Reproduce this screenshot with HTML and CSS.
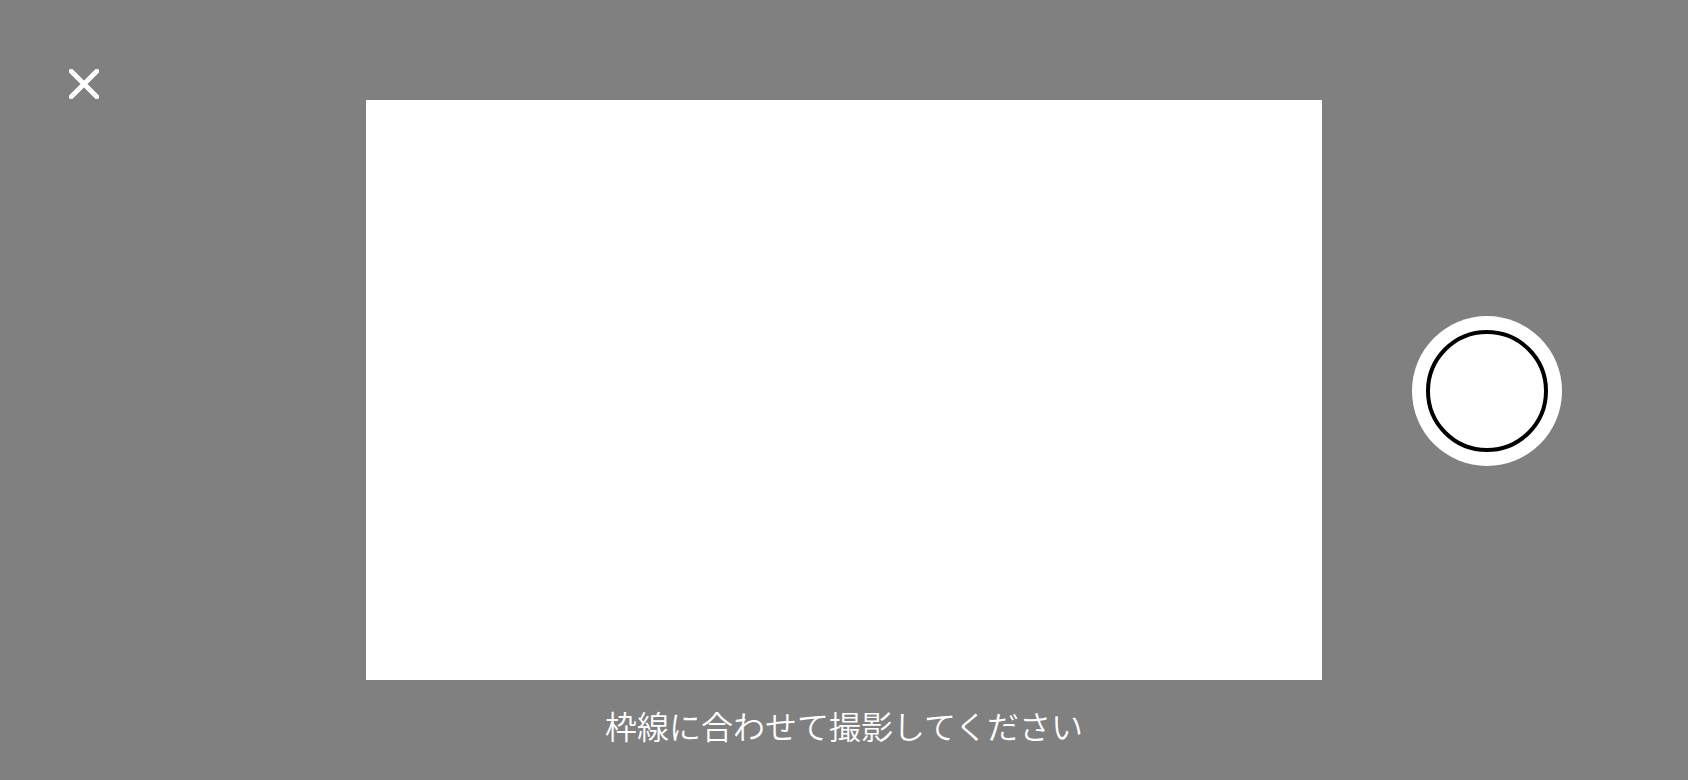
FILE: index.html
```html
<!DOCTYPE html>
<html lang="ja">
<head>
  <meta charset="UTF-8" />
  <meta name="viewport" content="width=device-width, initial-scale=1.0"/>
  <title>撮影</title>
  <link rel="stylesheet" href="styles.css">
</head>
<body>

<main class="camara">
  <div class="lado">
    <button type="button" class="cerrar" aria-label="閉じる">
      <svg width="30" height="30" viewBox="0 0 30 30" aria-hidden="true">
        <path d="M2.2 2.2 L27.8 27.8 M27.8 2.2 L2.2 27.8" />
      </svg>
    </button>
  </div>

  <div class="centro">
    <div class="marco"></div>
    <p class="mensaje">枠線に合わせて撮影してください</p>
  </div>

  <div class="lado lado-derecho">
    <button type="button" class="disparador" aria-label="撮影する">
      <span class="anillo"></span>
    </button>
  </div>
</main>

</body>
</html>
```

FILE: styles.css
```css
body {
  font-family: "Noto Sans CJK JP", sans-serif;
  margin: 0;
  background-color: #808080;
  color: white;
}

/* equal side columns keep the frame centred */
.camara {
  display: grid;
  grid-template-columns: minmax(0, 1fr) auto minmax(0, 1fr);
  min-height: 100vh;
}

.lado-derecho {
  display: flex;
  align-items: center;
  justify-content: flex-end;
  padding-top: 2px;
  padding-right: 126px;
}

.centro {
  display: flex;
  flex-direction: column;
  padding-top: 100px;
}

.marco {
  height: calc(100vh - 200px);
  aspect-ratio: 956 / 580;
  background: white;
}

.mensaje {
  margin: 0;
  padding-top: 21px;
  font-size: 32px;
  font-weight: 350;
  line-height: 48px;
  text-align: center;
}

button {
  padding: 0;
  border: none;
  background: none;
  cursor: pointer;
}

.cerrar {
  display: flex;
  align-items: center;
  justify-content: center;
  width: 48px;
  height: 48px;
  margin: 60px 0 0 60px;
}

.cerrar path {
  fill: none;
  stroke: white;
  stroke-width: 4.8;
  stroke-linecap: round;
}

.disparador {
  display: flex;
  align-items: center;
  justify-content: center;
  flex-shrink: 0;
  width: 150px;
  height: 150px;
  border-radius: 50%;
  background: white;
}

.anillo {
  box-sizing: border-box;
  width: 122px;
  height: 122px;
  border: 4px solid black;
  border-radius: 50%;
}
```
